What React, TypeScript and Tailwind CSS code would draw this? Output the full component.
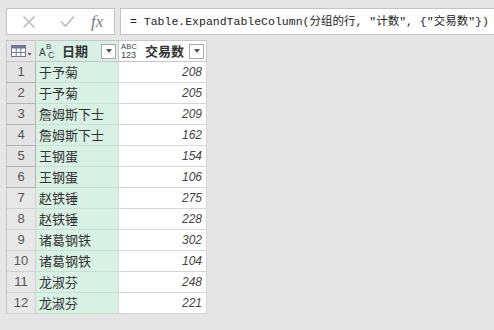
import React from "react";

const rows: [string, number][] = [
  ["于予菊", 208],
  ["于予菊", 205],
  ["詹姆斯下士", 209],
  ["詹姆斯下士", 162],
  ["王钢蛋", 154],
  ["王钢蛋", 106],
  ["赵铁锤", 275],
  ["赵铁锤", 228],
  ["诸葛钢铁", 302],
  ["诸葛钢铁", 104],
  ["龙淑芬", 248],
  ["龙淑芬", 221],
];

const cjk = { fontFamily: '"Noto Sans CJK SC", "Liberation Sans", sans-serif' };

const DropBtn = () => (
  <div className="w-[15px] h-[15px] border border-[#a9a9a9] bg-white flex items-center justify-center">
    <div className="w-0 h-0 border-l-[3.5px] border-r-[3.5px] border-t-[4px] border-l-transparent border-r-transparent border-t-[#555]" />
  </div>
);

const TableIcon = () => (
  <svg width="22" height="14" viewBox="0 0 22 14">
    <rect x="0.5" y="1.5" width="14" height="11" fill="#fff" stroke="#6d7a94" />
    <rect x="0.5" y="1.5" width="14" height="3" fill="#6d7a94" />
    <line x1="5.2" y1="1.5" x2="5.2" y2="12.5" stroke="#6d7a94" />
    <line x1="9.8" y1="1.5" x2="9.8" y2="12.5" stroke="#6d7a94" />
    <line x1="0.5" y1="8.5" x2="14.5" y2="8.5" stroke="#6d7a94" />
    <path d="M16.5 9 L20.5 9 L18.5 11.5 Z" fill="#555" />
  </svg>
);

export default function App() {
  return (
    <div
      className="w-[494px] h-[330px] bg-[#e6e6e6] overflow-hidden"
      style={{ fontFamily: '"Liberation Sans", "Noto Sans CJK SC", sans-serif' }}
    >
      {/* formula bar */}
      <div className="flex gap-[5px] pt-[8px] pl-[6px] -mr-4">
        <div className="w-[109px] h-[27px] bg-white border border-[#c3c3c3] flex items-center">
          <svg className="ml-[15px]" width="14" height="14" viewBox="0 0 14 14">
            <path d="M1.5 1.5 L12.5 12.5 M12.5 1.5 L1.5 12.5" stroke="#bdbdbd" strokeWidth="1.6" />
          </svg>
          <svg className="ml-[24px]" width="15" height="13" viewBox="0 0 15 13">
            <path d="M1 6.5 L5.5 11 L14 1.5" stroke="#bdbdbd" strokeWidth="1.6" fill="none" />
          </svg>
          <span
            className="ml-[16px] text-[17px] italic text-[#7a7a7a] leading-none"
            style={{ fontFamily: '"Liberation Serif", serif' }}
          >
            fx
          </span>
        </div>
        <div className="flex-1 h-[27px] bg-white border border-[#c3c3c3] flex items-center pl-[9px]">
          <span
            className="text-[11.5px] text-[#222] whitespace-pre"
            style={{ fontFamily: '"Liberation Mono", "Noto Sans CJK SC", monospace' }}
          >
            = Table.ExpandTableColumn(分组的行, "计数", {"{"}"交易数"{"}"})
          </span>
        </div>
      </div>

      {/* table */}
      <div className="ml-[6px] mt-[5px] w-[201px] border-l border-t border-[#c6c6c6] text-[#333]">
        <div className="flex h-[21px] border-b border-[#c6c6c6]">
          <div className="w-[29px] border-r border-[#c6c6c6] flex items-center pl-[4px]">
            <TableIcon />
          </div>
          <div className="w-[83px] bg-[#d9f1e4] border-r border-[#c6c6c6] flex items-center pl-[3px] pr-[2px]">
            <span className="relative w-[19px] h-[17px] text-[#444] leading-none">
              <span className="absolute left-0 top-[5px] text-[10px] leading-none">A</span>
              <span className="absolute left-[7px] top-[0px] text-[8px] leading-none">B</span>
              <span className="absolute left-[9px] top-[8px] text-[9px] leading-none">C</span>
            </span>
            <span className="ml-[4px] text-[13px] font-bold text-[#333]" style={cjk}>
              日期
            </span>
            <div className="ml-auto">
              <DropBtn />
            </div>
          </div>
          <div className="w-[88px] bg-white border-r border-[#c6c6c6] flex items-center pl-[2px] pr-[2px]">
            <span className="flex flex-col text-[#444] leading-[8px] w-[20px]">
              <span className="text-[7.5px] tracking-[0.2px]">ABC</span>
              <span className="text-[9px]">123</span>
            </span>
            <span className="ml-[4px] text-[13px] font-bold text-[#333]" style={cjk}>
              交易数
            </span>
            <div className="ml-auto">
              <DropBtn />
            </div>
          </div>
        </div>
        {rows.map(([name, n], i) => (
          <div key={i} className="flex h-[21px]">
            <div
              className={
                i < 6
                  ? "w-[29px] border-r border-b border-[#b4b4b4] bg-[#e4e4e4] flex items-center justify-center text-[13px] text-[#555]"
                  : "w-[29px] border-r border-b border-[#d2d2d2] bg-[#e8e8e8] flex items-center justify-center text-[13px] text-[#555]"
              }
            >
              {i + 1}
            </div>
            <div
              className="w-[83px] bg-[#d9f1e4] border-r border-b border-[#c8dfd2] flex items-center pl-[3px] text-[13px] text-[#333]"
              style={cjk}
            >
              {name}
            </div>
            <div className="w-[88px] bg-white border-r border-b border-[#d6d6d6] flex items-center justify-end pr-[4px] text-[12px] italic text-[#444]">
              {n}
            </div>
          </div>
        ))}
      </div>
    </div>
  );
}
